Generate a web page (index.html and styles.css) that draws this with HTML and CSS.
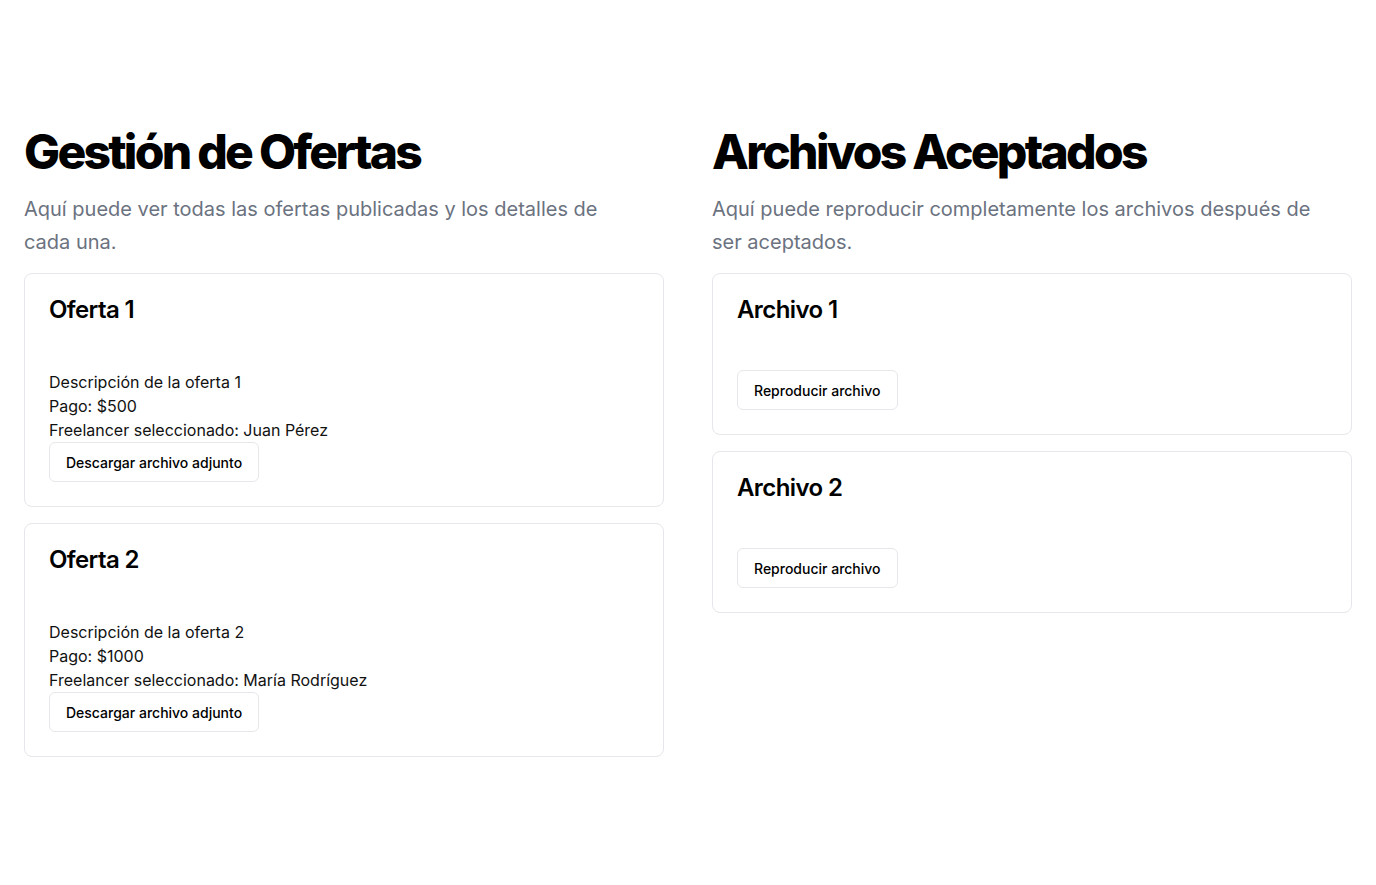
FILE: index.html
```html
<!DOCTYPE html>
<html lang="es">
<head>
<meta charset="utf-8">
<title>Ofertas</title>
<link rel="stylesheet" href="styles.css">
</head>
<body>
<main class="page">
  <section class="col">
    <h1 class="title">Gestión de Ofertas</h1>
    <p class="lead">Aquí puede ver todas las ofertas publicadas y los detalles de cada una.</p>
    <div class="list">
      <div class="card">
        <h2 class="card-title">Oferta 1</h2>
        <div class="card-body">
          <p class="line">Descripción de la oferta 1</p>
          <p class="line">Pago: $500</p>
          <p class="line">Freelancer seleccionado: Juan Pérez</p>
          <button class="btn">Descargar archivo adjunto</button>
        </div>
      </div>
      <div class="card">
        <h2 class="card-title">Oferta 2</h2>
        <div class="card-body">
          <p class="line">Descripción de la oferta 2</p>
          <p class="line">Pago: $1000</p>
          <p class="line">Freelancer seleccionado: María Rodríguez</p>
          <button class="btn">Descargar archivo adjunto</button>
        </div>
      </div>
    </div>
  </section>
  <section class="col">
    <h1 class="title">Archivos Aceptados</h1>
    <p class="lead">Aquí puede reproducir completamente los archivos después de ser aceptados.</p>
    <div class="list">
      <div class="card">
        <h2 class="card-title">Archivo 1</h2>
        <div class="card-body">
          <button class="btn">Reproducir archivo</button>
        </div>
      </div>
      <div class="card">
        <h2 class="card-title">Archivo 2</h2>
        <div class="card-body">
          <button class="btn">Reproducir archivo</button>
        </div>
      </div>
    </div>
  </section>
</main>
</body>
</html>
```

FILE: styles.css
```css
* { box-sizing: border-box; }
html, body { margin: 0; padding: 0; background: #fff; }
body {
  font-family: Inter, "Noto Sans", sans-serif;
  color: #0a0a0a;
}
.page {
  display: grid;
  grid-template-columns: 1fr 1fr;
  gap: 48px;
  padding: 128px 24px 40px;
  align-items: start;
}
.title {
  margin: 0;
  font-size: 48px;
  line-height: 48px;
  font-weight: 800;
  letter-spacing: -0.057em;
  color: #000;
}
.lead {
  margin: 17px 0 0;
  font-size: 20px;
  line-height: 32.5px;
  color: #6b7280;
  max-width: 600px;
}
.list {
  display: flex;
  flex-direction: column;
  gap: 16px;
  margin-top: 15px;
}
.card {
  border: 1px solid #e5e7eb;
  border-radius: 8px;
  padding: 24px;
  background: #fff;
}
.card-title {
  margin: 0;
  font-size: 24px;
  line-height: 24px;
  font-weight: 600;
  letter-spacing: -0.025em;
  color: #000;
}
.card-body {
  margin-top: 48px;
  display: flex;
  flex-direction: column;
  align-items: flex-start;
}
.line {
  margin: 0;
  font-size: 16px;
  line-height: 24px;
  color: #111;
}
.btn {
  height: 40px;
  padding: 0 16px;
  border: 1px solid #e5e7eb;
  border-radius: 6px;
  background: #fff;
  font-family: Inter, "Noto Sans", sans-serif;
  font-size: 14px;
  font-weight: 500;
  color: #000;
}
```
